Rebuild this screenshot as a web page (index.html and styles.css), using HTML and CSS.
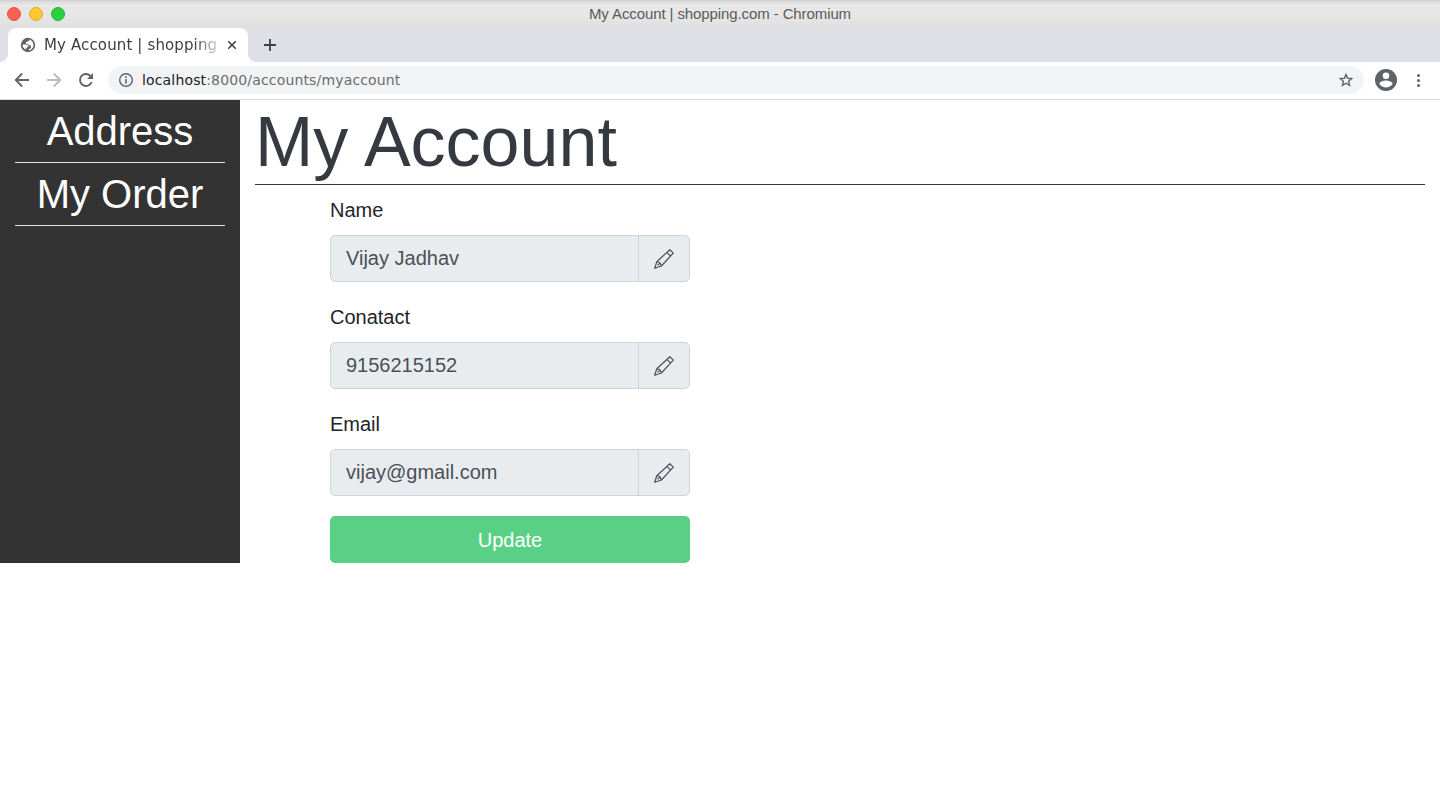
FILE: index.html
```html
<!DOCTYPE html>
<html lang="en">
<head>
<meta charset="utf-8">
<title>My Account | shopping.com</title>
<link rel="stylesheet" href="styles.css">
</head>
<body>
<header class="browser">
  <div class="titlebar">
    <div class="lights"><span class="light close"></span><span class="light minimise"></span><span class="light maximise"></span></div>
    <span class="window-title">My Account | shopping.com - Chromium</span>
  </div>
  <div class="tabstrip">
    <div class="tab">
      <svg class="globe" width="16" height="16" viewBox="0 0 16 16"><circle cx="8" cy="8" r="7.200" fill="#5f6368"/><path fill="#fff" d="M2.600 7.600h3.800c1.500 0 2.200.8 2.200 2.100H6.900v1.700H5.200v1.100C3.600 11.600 2.600 10 2.600 7.600zM9.300 2.600c2.400.6 4.200 2.700 4.200 5.400 0 2.700-2 5-4.700 5.400v-1.200c1.600-.2 2.300-1.300 2.300-2.400 0-1.200-.8-1.900-2-1.900-.9 0-.9-1.200-1.800-1.200H5.800c0-1.600.7-2.200 1.900-2.200 1.100 0 1.600-.7 1.600-1.900z"/></svg>
      <span class="tab-title">My Account | shopping</span>
      <svg class="tab-close" width="10" height="10" viewBox="0 0 10 10"><path d="M1.200 1.200l7.600 7.600M8.800 1.200L1.200 8.800" stroke="#3c4043" stroke-width="1.600"/></svg>
    </div>
    <svg class="new-tab" width="14" height="14" viewBox="0 0 14 14"><path d="M7 1v12M1 7h12" stroke="#3c4043" stroke-width="1.800"/></svg>
  </div>
  <div class="toolbar">
    <svg class="nav" width="16" height="16" viewBox="0 0 16 16"><path d="M15 8H2M8.200 1.500L1.700 8l6.500 6.500" fill="none" stroke="#5f6368" stroke-width="1.800"/></svg>
    <svg class="nav" width="16" height="16" viewBox="0 0 16 16"><path d="M1 8h13M7.800 1.500L14.300 8l-6.500 6.500" fill="none" stroke="#bababc" stroke-width="1.800"/></svg>
    <svg class="nav" width="16" height="16" viewBox="0 0 16 16"><path d="M13.600 10A6 6 0 1 1 12.300 3.800L13.500 5" fill="none" stroke="#5f6368" stroke-width="1.900"/><path d="M15 1v6H9z" fill="#5f6368"/></svg>
    <div class="address-bar">
      <svg width="16" height="16" viewBox="0 0 16 16"><circle cx="8" cy="8" r="6.300" fill="none" stroke="#5f6368" stroke-width="1.400"/><path d="M8 7v4.500M8 4.300v1.700" stroke="#5f6368" stroke-width="1.600"/></svg>
      <span class="url"><span class="host">localhost</span>:8000/accounts/myaccount</span>
      <svg width="16" height="16" viewBox="0 0 16 16"><path d="M8 2.500l1.650 3.750 4.050.4-3.050 2.700.9 4L8 11.250l-3.550 2.100.9-4L2.300 6.650l4.050-.4z" fill="none" stroke="#5f6368" stroke-width="1.400"/></svg>
    </div>
    <svg class="profile" width="22" height="22" viewBox="0 0 22 22"><circle cx="11" cy="11" r="11" fill="#5f6368"/><circle cx="11" cy="6.800" r="3.300" fill="#fff"/><path d="M4.400 15c0-2.200 4.400-3.400 6.600-3.400s6.600 1.200 6.600 3.400a8 8 0 0 1-13.200 0z" fill="#fff"/></svg>
    <svg class="menu" width="4" height="16" viewBox="0 0 4 16"><g fill="#5f6368"><circle cx="2.500" cy="3.500" r="1.500"/><circle cx="2.500" cy="8.500" r="1.500"/><circle cx="2.500" cy="13.500" r="1.500"/></g></svg>
  </div>
</header>
<div class="page">
  <nav class="sidebar">
    <a class="side-link">Address</a>
    <a class="side-link">My Order</a>
  </nav>
  <main class="content">
    <h1 class="heading">My Account</h1>
    <form class="form">
      <label class="label">Name</label>
      <div class="group"><span class="value">Vijay Jadhav</span><span class="edit"><svg width="20" height="20" viewBox="0 0 20 20"><use href="#pencil"/></svg></span></div>
      <label class="label">Conatact</label>
      <div class="group"><span class="value">9156215152</span><span class="edit"><svg width="20" height="20" viewBox="0 0 20 20"><use href="#pencil"/></svg></span></div>
      <label class="label">Email</label>
      <div class="group"><span class="value">vijay@gmail.com</span><span class="edit"><svg width="20" height="20" viewBox="0 0 20 20"><use href="#pencil"/></svg></span></div>
      <button class="update" type="button">Update</button>
    </form>
  </main>
</div>
<svg class="defs" width="0" height="0"><defs>
  <path id="pencil" d="M.7 19.300L2.800 12.700 15.800.7l3.500 3.400L7.400 17zM12.900 3.400l3.500 3.500M2.800 12.700l2.600.8.900 1.100 1.100 2.400M5.400 14.600l-1.800 1.600" fill="none" stroke="#495057" stroke-width="1.200" stroke-linejoin="round"/>
</defs></svg>
</body>
</html>
```
FILE: styles.css
```css
* { box-sizing: border-box; }
body {
  margin: 0;
  height: 810px;
  overflow: hidden;
  background: #fff;
  color: #212529;
  font: 20px/1.5 "Liberation Sans", Arial, sans-serif;
}
svg { display: block; flex: none; }
.titlebar {
  display: grid;
  grid-template-columns: 1fr auto 1fr;
  align-items: center;
  height: 28px;
  background: linear-gradient(#cfcfcf, #dedede 2px, #e7e7e7 5px, #e7e7e7 12px, #e0e0e1);
}
.lights { display: flex; gap: 8px; padding-left: 7px; }
.light { width: 14px; height: 14px; border-radius: 50%; border: 1px solid; }
.close { background: #ff6054; border-color: #e65448; }
.minimise { background: #ffc82f; border-color: #dfad28; }
.maximise { background: #29d13f; border-color: #24b434; }
.window-title { font-size: 15px; letter-spacing: -0.1px; line-height: 28px; color: #5a5a5a; }
.tabstrip { display: flex; align-items: center; height: 34px; padding-left: 8px; background: #dee0e6; }
.tab {
  position: relative;
  display: flex;
  align-items: center;
  width: 240px;
  height: 34px;
  padding: 0 11px 0 12px;
  background: #fff;
  border-radius: 8px 8px 0 0;
}
.tab::before, .tab::after { content: ""; position: absolute; bottom: 0; width: 8px; height: 8px; }
.tab::before { left: -8px; background: radial-gradient(circle at 0 0, transparent 7.500px, #fff 8.500px); }
.tab::after { right: -8px; background: radial-gradient(circle at 100% 0, transparent 7.500px, #fff 8.500px); }
.tab-title {
  width: 175px;
  margin: 0 8px;
  white-space: nowrap;
  font: 15px/34px "DejaVu Sans", sans-serif;
  letter-spacing: 0.13px;
  color: #3c4043;
  -webkit-mask-image: linear-gradient(90deg, #000 150px, transparent 180px);
  mask-image: linear-gradient(90deg, #000 150px, transparent 180px);
}
.new-tab { margin-left: 15px; }
.toolbar { display: flex; align-items: center; height: 38px; padding: 0 20px 1px 14px; border-bottom: 1px solid #dadce0; background: #fff; }
.nav { margin-right: 16px; }
.address-bar { display: flex; align-items: center; flex: 1; height: 28px; margin-left: -2px; padding: 0 10px; border-radius: 14px; background: #f1f3f4; }
.url { flex: 1; margin-left: 8px; font: 14px/28px "DejaVu Sans", sans-serif; letter-spacing: 0.155px; color: #6a6d70; }
.host { color: #202124; }
.profile { margin-left: 11px; }
.menu { margin-left: 19px; }
.page { display: flex; height: 463px; }
.sidebar { width: 240px; padding: 0 15px; background: #333; }
.side-link { display: block; border-bottom: 1px solid #e6e6e6; color: #fff; font-size: 40px; line-height: 62px; text-align: center; }
.content { flex: 1; padding: 0 15px; }
.heading { margin: 0; border-bottom: 1px solid #343a40; color: #343a40; font-size: 70px; font-weight: 400; line-height: 84px; }
.form { width: 360px; margin: 10px 0 0 75px; }
.label { display: block; margin-bottom: 10px; }
.group { display: flex; height: 47px; margin-bottom: 20px; border: 1px solid #ced4da; border-radius: 5px; background: #e9ecef; color: #495057; }
.value { flex: 1; padding-left: 15px; line-height: 45px; }
.edit { display: flex; align-items: center; justify-content: center; width: 51px; padding-top: 1px; border-left: 1px solid #ced4da; }
.update { display: block; width: 100%; height: 47px; padding: 0; border: 0; border-radius: 5px; background: #5ad086; color: #fff; font: inherit; }
.defs { position: absolute; }
```
